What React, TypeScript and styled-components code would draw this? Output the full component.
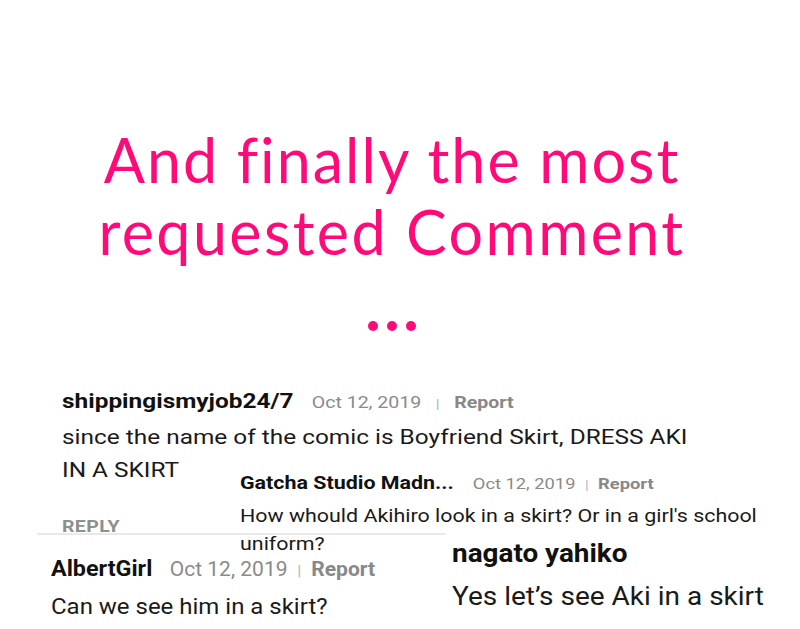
import React from "react";
import styled, { createGlobalStyle } from "styled-components";

const Global = createGlobalStyle`
  html, body { margin: 0; padding: 0; background: #ffffff; }
  body { font-family: Roboto, "Liberation Sans", sans-serif; }
`;

const Page = styled.div`
  position: relative;
  width: 800px;
  height: 629px;
  overflow: hidden;
  background: #ffffff;
`;

const Title = styled.h1`
  margin: 0;
  padding-top: 124px;
  padding-right: 16px;
  font-family: Lato, "Open Sans", sans-serif;
  font-weight: 400;
  font-size: 61px;
  line-height: 72px;
  letter-spacing: 2px;
  color: #ff0a78;
  text-align: center;
`;

const TitleLine = styled.span<{ $ls?: number }>`
  display: block;
  ${(p) => (p.$ls !== undefined ? `letter-spacing: ${p.$ls}px;` : "")}
`;

const Dots = styled.div`
  display: flex;
  justify-content: center;
  gap: 9px;
  margin-top: 53px;
  padding-right: 17px;
`;

const Dot = styled.span`
  width: 10px;
  height: 10px;
  border-radius: 50%;
  background: #ff0a78;
`;

/* A pasted comment screenshot placed freely on the collage canvas */
const Snip = styled.div<{ $x: number; $y: number; $z: number; $w?: number; $h?: number; $boxed?: boolean }>`
  position: absolute;
  left: ${(p) => p.$x}px;
  top: ${(p) => p.$y}px;
  z-index: ${(p) => p.$z};
  ${(p) => (p.$w ? `width: ${p.$w}px;` : "")}
  ${(p) => (p.$h ? `height: ${p.$h}px;` : "")}
  ${(p) =>
    p.$boxed
      ? `background: #ffffff; border-top: 2px solid #e9e9e9; padding: 21px 0 0 14px; box-sizing: border-box;`
      : ""}
  font-family: Roboto, "Liberation Sans", sans-serif;
`;

/* the screenshots are stretched horizontally */
const Stretch = styled.div<{ $sx: number }>`
  transform: scaleX(${(p) => p.$sx});
  transform-origin: left top;
`;

const Header = styled.div<{ $gap: number }>`
  display: flex;
  align-items: baseline;
  gap: ${(p) => p.$gap}px;
  white-space: nowrap;
`;

const Name = styled.span<{ $size: number }>`
  font-size: ${(p) => p.$size}px;
  font-weight: 700;
  color: #111111;
`;

const Meta = styled.span<{ $size: number; $pipe: number }>`
  display: flex;
  align-items: baseline;
  gap: ${(p) => p.$pipe}px;
  font-size: ${(p) => p.$size}px;
  color: #8a8a8a;
`;

const Pipe = styled.span`
  color: #b5b5b5;
  font-size: 0.8em;
`;

const Report = styled.span`
  font-weight: 700;
  color: #888888;
`;

const Body = styled.div<{ $size: number; $lh: number; $mt: number }>`
  margin-top: ${(p) => p.$mt}px;
  font-size: ${(p) => p.$size}px;
  line-height: ${(p) => p.$lh}px;
  color: #1a1a1a;
  white-space: nowrap;
`;

const Reply = styled.div`
  margin-top: 30px;
  font-size: 16px;
  font-weight: 700;
  color: #8f8f8f;
  letter-spacing: 0.3px;
`;

type MetaProps = { size: number; pipe: number };
const MetaLine = ({ size, pipe }: MetaProps) => (
  <Meta $size={size} $pipe={pipe}>
    <span>Oct 12, 2019</span>
    <Pipe>|</Pipe>
    <Report>Report</Report>
  </Meta>
);

export default function App() {
  return (
    <Page>
      <Global />
      <Title>
        <TitleLine>And finally the most</TitleLine>
        <TitleLine $ls={2.4}>requested Comment</TitleLine>
      </Title>
      <Dots>
        <Dot />
        <Dot />
        <Dot />
      </Dots>

      <Snip $x={62} $y={389} $z={1} $h={144}>
        <Stretch $sx={1.22}>
          <Header $gap={15}>
            <Name $size={20}>shippingismyjob24/7</Name>
            <MetaLine size={16} pipe={12} />
          </Header>
          <Body $size={20} $lh={33} $mt={8}>
            since the name of the comic is Boyfriend Skirt, DRESS AKI
            <br />
            IN A SKIRT
          </Body>
          <Reply>REPLY</Reply>
        </Stretch>
      </Snip>

      <Snip $x={37} $y={533} $z={2} $w={409} $h={96} $boxed>
        <Stretch $sx={1.09}>
          <Header $gap={16}>
            <Name $size={21.4}>AlbertGirl</Name>
            <MetaLine size={19.3} pipe={9} />
          </Header>
          <Body $size={22} $lh={30} $mt={11}>
            Can we see him in a skirt?
          </Body>
        </Stretch>
      </Snip>

      <Snip $x={240} $y={472} $z={3}>
        <Stretch $sx={1.19}>
          <Header $gap={16}>
            <Name $size={18}>Gatcha Studio Madn...</Name>
            <MetaLine size={15.4} pipe={8} />
          </Header>
          <Body $size={18} $lh={28} $mt={9}>
            How whould Akihiro look in a skirt? Or in a girl's school
            <br />
            uniform?
          </Body>
        </Stretch>
      </Snip>

      <Snip $x={452} $y={539} $z={4}>
        <Stretch $sx={1.12}>
          <Header $gap={0}>
            <Name $size={24.9}>nagato yahiko</Name>
          </Header>
          <Body $size={25} $lh={34} $mt={12}>
            Yes let’s see Aki in a skirt
          </Body>
        </Stretch>
      </Snip>
    </Page>
  );
}
